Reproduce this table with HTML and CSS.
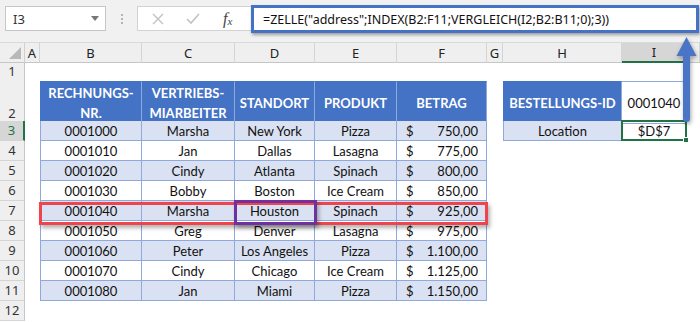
FILE: index.html
```html
<!DOCTYPE html>
<html lang="de">
<head>
<meta charset="utf-8">
<title>ZELLE INDEX VERGLEICH</title>
<link rel="stylesheet" href="styles.css">
</head>
<body>
<div class="app">
  <div class="toolbar">
    <div class="namebox"><span class="nb-text">I3</span><span class="caret"></span></div>
    <div class="grip"><i></i><i></i><i></i></div>
    <div class="fbtns">
      <svg class="ico" width="12" height="12" viewBox="0 0 12 12"><path d="M1 1 L11 11 M11 1 L1 11" stroke="#c2c2c2" stroke-width="1.4" fill="none"/></svg>
      <svg class="ico" width="14" height="12" viewBox="0 0 14 12"><path d="M1 6 L5 10 L13 1" stroke="#c2c2c2" stroke-width="1.6" fill="none"/></svg>
      <span class="fx">f<sub>x</sub></span>
    </div>
    <div class="formula">=ZELLE("address";INDEX(B2:F11;VERGLEICH(I2;B2:B11;0);3))</div>
  </div>

  <div class="sheet">
    <div class="row hdr">
      <div class="corner"></div>
      <div class="ch">A</div><div class="ch">B</div><div class="ch">C</div><div class="ch">D</div><div class="ch">E</div><div class="ch">F</div><div class="ch">G</div><div class="ch">H</div><div class="ch sel">I</div><div class="ch"></div>
    </div>
    <div class="row r1">
      <div class="rh">1</div>
    </div>
    <div class="row r2">
      <div class="rh">2</div><div></div>
      <div class="th first">RECHNUNGS-<br>NR.</div>
      <div class="th">VERTRIEBS-<br>MIARBEITER</div>
      <div class="th">STANDORT</div>
      <div class="th">PRODUKT</div>
      <div class="th">BETRAG</div>
      <div></div>
      <div class="th first">BESTELLUNGS-ID</div>
      <div class="t top">0001040</div>
    </div>
    <div class="row">
      <div class="rh cur">3</div><div></div>
      <div class="t first band">0001000</div><div class="t band">Marsha</div><div class="t band">New York</div><div class="t band">Pizza</div>
      <div class="t band amt"><span>$</span><span>750,00</span></div>
      <div></div>
      <div class="t first band">Location</div>
      <div class="t active">$D$7<span class="handle"></span></div>
    </div>
    <div class="row">
      <div class="rh">4</div><div></div>
      <div class="t first">0001010</div><div class="t">Jan</div><div class="t">Dallas</div><div class="t">Lasagna</div>
      <div class="t amt"><span>$</span><span>775,00</span></div>
    </div>
    <div class="row">
      <div class="rh">5</div><div></div>
      <div class="t first band">0001020</div><div class="t band">Cindy</div><div class="t band">Atlanta</div><div class="t band">Spinach</div>
      <div class="t band amt"><span>$</span><span>800,00</span></div>
    </div>
    <div class="row">
      <div class="rh">6</div><div></div>
      <div class="t first">0001030</div><div class="t">Bobby</div><div class="t">Boston</div><div class="t">Ice Cream</div>
      <div class="t amt"><span>$</span><span>850,00</span></div>
    </div>
    <div class="row">
      <div class="rh">7</div><div></div>
      <div class="t first band">0001040</div><div class="t band">Marsha</div><div class="t band">Houston</div><div class="t band">Spinach</div>
      <div class="t band amt"><span>$</span><span>925,00</span></div>
    </div>
    <div class="row">
      <div class="rh">8</div><div></div>
      <div class="t first">0001050</div><div class="t">Greg</div><div class="t">Denver</div><div class="t">Lasagna</div>
      <div class="t amt"><span>$</span><span>975,00</span></div>
    </div>
    <div class="row">
      <div class="rh">9</div><div></div>
      <div class="t first band">0001060</div><div class="t band">Peter</div><div class="t band">Los Angeles</div><div class="t band">Pizza</div>
      <div class="t band amt"><span>$</span><span>1.100,00</span></div>
    </div>
    <div class="row">
      <div class="rh">10</div><div></div>
      <div class="t first">0001070</div><div class="t">Cindy</div><div class="t">Chicago</div><div class="t">Ice Cream</div>
      <div class="t amt"><span>$</span><span>1.125,00</span></div>
    </div>
    <div class="row">
      <div class="rh">11</div><div></div>
      <div class="t first band">0001080</div><div class="t band">Jan</div><div class="t band">Miami</div><div class="t band">Pizza</div>
      <div class="t band amt"><span>$</span><span>1.150,00</span></div>
    </div>
    <div class="row">
      <div class="rh">12</div>
    </div>
  </div>

  <div class="mark-row"></div>
  <div class="mark-cell"></div>
  <svg class="arrow" width="26" height="92" viewBox="0 0 26 92">
    <path d="M2.5 21 L12.5 2 L22.5 21 Z" fill="#4a75c6"/>
    <rect x="9" y="19" width="7" height="68" rx="3.5" fill="#4a75c6"/>
  </svg>
</div>
</body>
</html>
```

FILE: styles.css
```css
* { box-sizing: border-box; }
html, body { margin: 0; padding: 0; background: #fff; }
.app {
  position: relative;
  width: 700px;
  height: 322px;
  overflow: hidden;
  font-family: Lato, "Open Sans", sans-serif;
}
.toolbar {
  height: 43px;
  background: #f1f1f1;
  border-bottom: 1px solid #dadada;
  display: flex;
  align-items: flex-start;
  padding-top: 5px;
  font-family: "Noto Sans", "Open Sans", sans-serif;
}
.namebox {
  margin: 1px 0 0 5px;
  width: 101px;
  height: 25px;
  background: #fff;
  border: 1px solid #c6c6c6;
  display: flex;
  align-items: center;
  justify-content: space-between;
  padding: 0 6px 0 7px;
  font-size: 13px;
  color: #333;
}
.caret {
  width: 0; height: 0;
  border-left: 4px solid transparent;
  border-right: 4px solid transparent;
  border-top: 5px solid #777;
}
.grip {
  width: 31px;
  height: 25px;
  margin-top: 1px;
  display: flex;
  flex-direction: column;
  align-items: center;
  justify-content: center;
  gap: 2px;
}
.grip i { width: 2px; height: 2px; background: #b4b4b4; display: block; }
.fbtns {
  margin-top: 1px;
  width: 114px;
  height: 25px;
  background: #fff;
  border: 1px solid #d2d2d2;
  border-right: none;
  display: flex;
  align-items: center;
  padding-left: 14px;
  gap: 22px;
}
.fx {
  font-family: "Liberation Serif", serif;
  font-style: italic;
  font-size: 16px;
  color: #444;
  margin-left: 1px;
}
.fx sub { font-size: 11px; vertical-align: -1px; }
.formula {
  width: 448px;
  height: 28px;
  background: #fff;
  border: 3px solid #4472c4;
  box-shadow: 1px 2px 3px rgba(0,0,0,0.35);
  font-size: 12.5px;
  color: #111;
  display: flex;
  align-items: center;
  padding-left: 9px;
  white-space: nowrap;
}

.sheet { display: flex; flex-direction: column; }
.row {
  display: grid;
  grid-template-columns: 25px 15px 102px 93px 80px 82px 90px 16px 119px 65px 13px;
  height: 20px;
}
.row.hdr { height: 19px; }
.row.r1 { height: 19px; }
.row.r2 { height: 40px; }

.corner {
  background: #efefef;
  border-right: 1px solid #d0d0d0;
  border-bottom: 1px solid #c6c6c6;
  position: relative;
}
.corner::after {
  content: "";
  position: absolute;
  right: 3px; bottom: 3px;
  border-left: 12px solid transparent;
  border-bottom: 12px solid #b8b8b8;
}
.ch {
  background: #efefef;
  border-right: 1px solid #d4d4d4;
  border-bottom: 1px solid #c6c6c6;
  font-family: "Noto Sans", "Open Sans", sans-serif;
  font-size: 13px;
  color: #222;
  display: flex;
  align-items: center;
  justify-content: center;
}
.ch.sel {
  background: #d6d6d6;
  border-bottom: 2px solid #217346;
}
.rh {
  background: #efefef;
  border-right: 1px solid #c6c6c6;
  border-bottom: 1px solid #d4d4d4;
  font-family: "Noto Sans", "Open Sans", sans-serif;
  font-size: 13px;
  color: #333;
  display: flex;
  align-items: flex-end;
  justify-content: center;
  padding-bottom: 1px;
}
.rh.cur {
  background: #d6d6d6;
  color: #217346;
  border-right: 2px solid #217346;
}

.th, .t {
  display: flex;
  align-items: center;
  justify-content: center;
  text-align: center;
  border-right: 1px solid #8ea9db;
  border-bottom: 1px solid #8ea9db;
  font-size: 13px;
  color: #111;
  padding-top: 1px;
}
.th {
  background: #4472c4;
  color: #fff;
  font-weight: bold;
  line-height: 20px;
  border-top: 1px solid #4472c4;
  border-right-color: #8eaadc;
  border-bottom-color: #8ea9db;
}
.first { border-left: 1px solid #8ea9db; }
.th.first { border-left-color: #4472c4; }
.top { border-top: 1px solid #8ea9db; }
.band { background: #d9e1f2; }
.amt {
  justify-content: space-between;
  padding: 1px 8px 0 9px;
}
.active {
  position: relative;
  border: 2px solid #217346;
  margin: -1px 0 0 -1px;
}
.handle {
  position: absolute;
  right: -4px; bottom: -4px;
  width: 6px; height: 6px;
  background: #217346;
  border: 1px solid #fff;
}

.mark-row {
  position: absolute;
  left: 39px; top: 202px;
  width: 449px; height: 23px;
  border: 3px solid #f0444c;
  box-shadow: 2px 3px 4px rgba(0,0,0,0.3);
}
.mark-cell {
  position: absolute;
  left: 234px; top: 200px;
  width: 83px; height: 25px;
  border: 3px solid #7030a0;
  box-shadow: 2px 3px 4px rgba(0,0,0,0.3);
}
.arrow {
  position: absolute;
  left: 674px; top: 35px;
  filter: drop-shadow(1px 2px 2px rgba(0,0,0,0.35));
}
```
